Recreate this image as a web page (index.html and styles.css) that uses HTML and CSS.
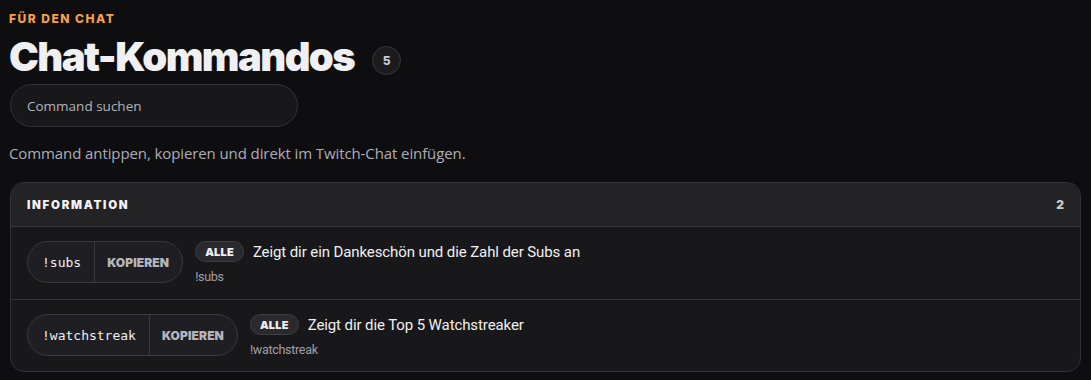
FILE: index.html
```html
<!DOCTYPE html>
<html lang="de">
<head>
<meta charset="utf-8">
<title>Chat-Kommandos</title>
<link rel="stylesheet" href="styles.css">
</head>
<body>
<main class="page">
  <div class="eyebrow">FÜR DEN CHAT</div>
  <div class="title-row">
    <h1 class="title">Chat-Kommandos</h1>
    <span class="count">5</span>
  </div>
  <div class="search"><span class="placeholder">Command suchen</span></div>
  <p class="hint">Command antippen, kopieren und direkt im Twitch-Chat einfügen.</p>
  <section class="card">
    <header class="card-head">
      <span class="card-title">INFORMATION</span>
      <span class="card-count">2</span>
    </header>
    <div class="row">
      <div class="pill">
        <span class="cmd">!subs</span>
        <span class="copy">KOPIEREN</span>
      </div>
      <div class="info">
        <div class="line">
          <span class="tag">ALLE</span>
          <span class="desc">Zeigt dir ein Dankeschön und die Zahl der Subs an</span>
        </div>
        <div class="alias">!subs</div>
      </div>
    </div>
    <div class="row">
      <div class="pill">
        <span class="cmd">!watchstreak</span>
        <span class="copy">KOPIEREN</span>
      </div>
      <div class="info">
        <div class="line">
          <span class="tag">ALLE</span>
          <span class="desc">Zeigt dir die Top 5 Watchstreaker</span>
        </div>
        <div class="alias">!watchstreak</div>
      </div>
    </div>
  </section>
</main>
</body>
</html>
```
FILE: styles.css
```css
* { box-sizing: border-box; }
html, body { margin: 0; padding: 0; }
body {
  background: #0e0e10;
  color: #efeff1;
  font-family: "Open Sans", "Noto Sans", sans-serif;
}
.page {
  padding: 9px 10px 0 9px;
}
.eyebrow {
  color: #f5a04a;
  font-family: "Inter", sans-serif;
  font-weight: 800;
  font-size: 12px;
  letter-spacing: 1.5px;
  line-height: 20px;
}
.title-row {
  display: flex;
  align-items: center;
  gap: 18px;
  margin-top: 8px;
  height: 40px;
}
.title {
  margin: 0;
  font-family: "Inter", sans-serif;
  font-weight: 900;
  font-size: 40px;
  letter-spacing: -1.6px;
  line-height: 40px;
  color: #f0f0f2;
}
.count {
  width: 29px;
  height: 29px;
  border-radius: 50%;
  background: #1c1c1f;
  border: 1px solid #38383c;
  color: #c8c8d0;
  font-family: "Inter", sans-serif;
  font-weight: 800;
  font-size: 12px;
  display: flex;
  align-items: center;
  justify-content: center;
  margin-top: 6px;
}
.search {
  margin-top: 7px;
  margin-left: 1px;
  width: 288px;
  height: 43px;
  border-radius: 22px;
  background: #18181b;
  border: 1px solid #333337;
  display: flex;
  align-items: center;
  padding-left: 16px;
}
.placeholder {
  color: #b3b3ba;
  font-size: 13.5px;
}
.hint {
  margin: 16px 0 0 0;
  color: #adadb8;
  font-size: 15px;
  letter-spacing: -0.1px;
  line-height: 20px;
}
.card {
  margin: 19px 0 0 1px;
  border: 1px solid #333337;
  border-radius: 14px;
  background: #18181b;
  overflow: hidden;
}
.card-head {
  height: 44px;
  background: #232326;
  border-bottom: 1px solid #37373b;
  display: flex;
  align-items: center;
  justify-content: space-between;
  padding: 0 16px 0 16px;
}
.card-title {
  font-family: "Inter", sans-serif;
  font-weight: 900;
  font-size: 11.5px;
  letter-spacing: 1.7px;
  color: #f2f2f4;
}
.card-count {
  font-family: "Inter", sans-serif;
  font-weight: 900;
  font-size: 12px;
  color: #c8c8d0;
}
.row {
  display: flex;
  align-items: flex-start;
  gap: 12px;
  padding: 14px 16px 14px 16px;
  height: 72px;
}
.row + .row {
  border-top: 1px solid #333337;
}
.pill {
  display: flex;
  align-items: stretch;
  height: 42px;
  border: 1px solid #3a3a3e;
  border-radius: 21px;
  background: #1f1f23;
  overflow: hidden;
}
.cmd {
  display: flex;
  align-items: center;
  padding: 0 13px 0 14px;
  font-family: "DejaVu Sans Mono", monospace;
  font-size: 13px;
  color: #f0f0f2;
  border-right: 1px solid #3a3a3e;
}
.copy {
  display: flex;
  align-items: center;
  padding: 0 13px 0 12px;
  font-family: "Inter", sans-serif;
  font-weight: 900;
  font-size: 12px;
  letter-spacing: 0.1px;
  color: #b5b5bd;
}
.info {
  display: flex;
  flex-direction: column;
  gap: 7px;
}
.line {
  display: flex;
  align-items: center;
  gap: 9px;
}
.tag {
  height: 21px;
  padding: 0 9px;
  border-radius: 11px;
  border: 1px solid #3e3e42;
  background: #2a2a2e;
  display: flex;
  align-items: center;
  font-family: "Inter", sans-serif;
  font-weight: 900;
  font-size: 11px;
  letter-spacing: 0.2px;
  color: #eeeef0;
}
.desc {
  font-family: "Roboto", sans-serif;
  font-size: 15px;
  letter-spacing: -0.1px;
  color: #f0f0f2;
}
.alias {
  font-family: "Roboto", sans-serif;
  font-size: 12.5px;
  letter-spacing: -0.3px;
  color: #a0a0a8;
}
```
